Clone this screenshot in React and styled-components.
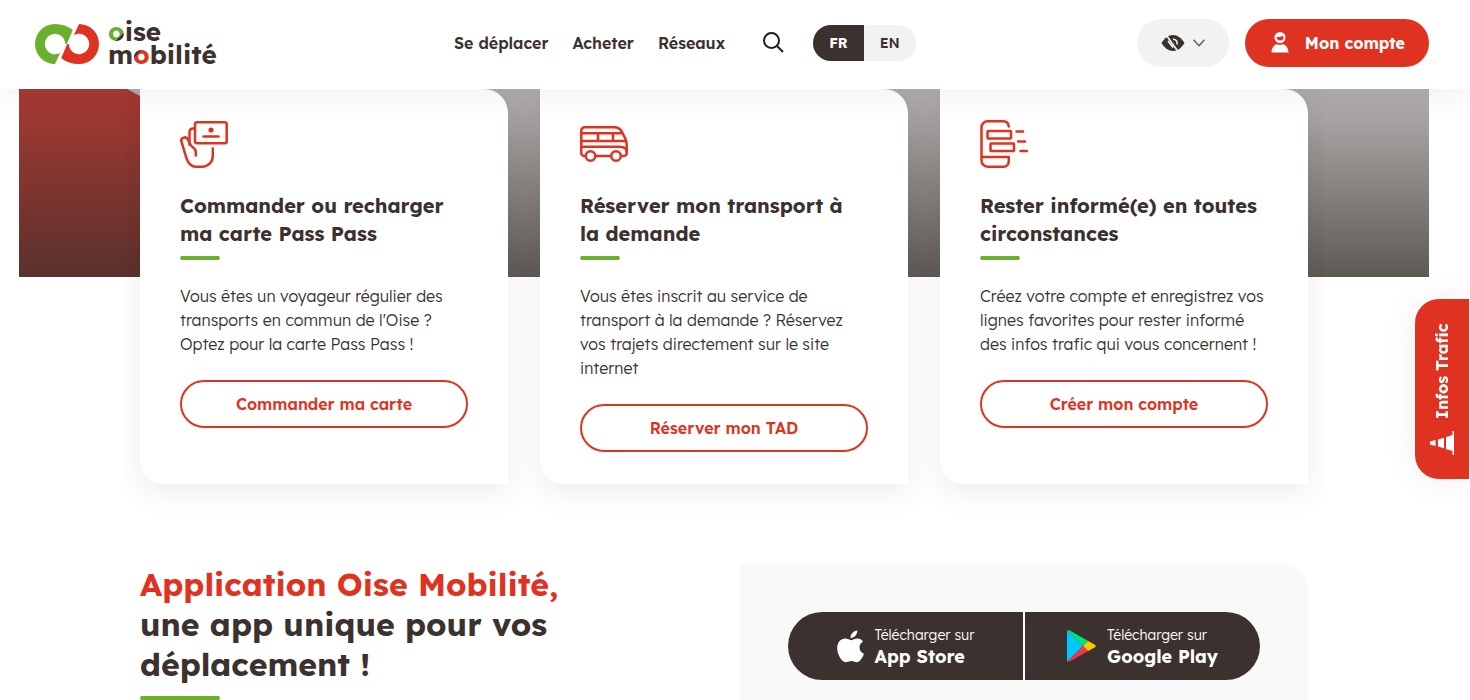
import styled, { createGlobalStyle, css } from "styled-components";

const colors = {
  red: "#e03221",
  green: "#6ab02e",
  dark: "#3b312e",
  grey: "#f2f2f2",
};

const GlobalStyle = createGlobalStyle`
  *, *::before, *::after {
    box-sizing: border-box;
  }
  body {
    margin: 0;
    background: #fff;
    color: ${colors.dark};
    font-family: Lexend, Inter, "Liberation Sans", sans-serif;
    font-size: 16px;
    line-height: 24px;
    overflow: hidden;
  }
  h1, h2, h3, p, ul {
    margin: 0;
    padding: 0;
  }
  a {
    color: inherit;
    text-decoration: none;
  }
  button {
    font-family: inherit;
    border: 0;
    cursor: pointer;
  }
  svg {
    display: block;
    flex: none;
  }
`;

// header
const Header = styled.header`
  position: sticky;
  top: 0;
  z-index: 10;
  display: flex;
  align-items: center;
  padding: 19px 41px 22px 35px;
  background: #fff;
  box-shadow: 0 8px 32px rgba(0, 0, 0, 0.06);
`;

const LogoLink = styled.a`
  display: flex;
  align-items: flex-end;
  gap: 9px;
  width: 184px;
`;

const LogoText = styled.span`
  font-size: 26px;
  font-weight: 700;
  line-height: 23px;
`;

const LogoWord = styled.span`
  display: flex;
`;

const LogoLetter = styled.span`
  background: linear-gradient(
    ${({ $angle }) => $angle},
    ${({ $color }) => $color} ${({ $stop }) => $stop},
    ${colors.dark} ${({ $stop }) => $stop}
  );
  background-clip: text;
  color: transparent;
`;

const Nav = styled.nav`
  display: flex;
  align-items: center;
  gap: 24px;
  margin-left: 235px;
  font-weight: 600;
`;

const SearchButton = styled.button`
  display: flex;
  padding: 0;
  margin: 0 4px 0 14px;
  background: none;
  color: #1c1c22;
`;

const LangSwitch = styled.div`
  display: flex;
  border-radius: 18px;
  overflow: hidden;
  background: ${colors.grey};
`;

const LangLink = styled.a`
  padding: 6px 16px;
  font-size: 14px;
  ${({ $active }) =>
    $active &&
    css`
      background: ${colors.dark};
      color: #fff;
      font-weight: 700;
    `}
`;

const Actions = styled.div`
  display: flex;
  gap: 16px;
  margin-left: auto;
`;

const PillButton = styled.button`
  display: flex;
  align-items: center;
  height: 48px;
  padding: 0 24px;
  border-radius: 24px;
  gap: ${({ $primary }) => ($primary ? "14px" : "8px")};
  background: ${({ $primary }) => ($primary ? colors.red : colors.grey)};
  color: ${({ $primary }) => ($primary ? "#fff" : colors.dark)};
  font-size: 16px;
  font-weight: 700;
`;

// hero and cards
const Main = styled.main`
  padding: 0 41px 0 19px;
`;

const Hero = styled.div`
  height: 188px;
  background: linear-gradient(#b4b0af, #a09b9a 25%, #5f5954);
`;

const HeroShape = styled.svg`
  width: 121px;
  height: 188px;
`;

const Carousel = styled.ul`
  max-width: 1200px;
  margin: -188px auto 0;
  padding: 0 16px 48px;
  display: grid;
  grid-template-columns: repeat(3, 1fr);
  gap: 32px;
  overflow: hidden;
  position: relative;
  list-style: none;
`;

const Card = styled.li`
  padding: 31px 40px 32px;
  background: #fff;
  border-radius: 0 24px 0 24px;
  box-shadow: 0 8px 32px rgba(0, 0, 0, 0.08);
`;

const CardTitle = styled.h3`
  margin-top: 24px;
  font-size: 20px;
  font-weight: 700;
  line-height: 28px;
`;

const Underline = styled.span`
  display: block;
  width: ${({ $wide }) => ($wide ? "80px" : "40px")};
  height: 4px;
  margin-top: ${({ $wide }) => ($wide ? "12px" : "8px")};
  border-radius: 2px;
  background: ${colors.green};
`;

const CardText = styled.p`
  margin: 24px 0;
  font-weight: 300;
`;

const CardLink = styled.a`
  display: block;
  padding: 10px 24px;
  border: 2px solid ${colors.red};
  border-radius: 24px;
  color: ${colors.red};
  font-weight: 600;
  text-align: center;
`;

// app section
const AppSection = styled.section`
  max-width: 1168px;
  margin: 32px auto 0;
  display: grid;
  grid-template-columns: 1fr 568px;
  gap: 32px;
`;

const AppTitle = styled.h2`
  font-size: 32px;
  font-weight: 700;
  line-height: 40px;
  em {
    display: block;
    font-style: normal;
    color: ${colors.red};
  }
`;

const StorePanel = styled.div`
  padding: 48px;
  background: #f9f9f9;
  border-radius: 0 24px 0 24px;
`;

const StoreLinks = styled.div`
  display: grid;
  grid-template-columns: 1fr 1fr;
  gap: 2px;
  border-radius: 34px;
  overflow: hidden;
  background: #fff;
`;

const StoreLink = styled.a`
  display: flex;
  align-items: center;
  justify-content: center;
  gap: 11px;
  height: 68px;
  background: ${colors.dark};
  color: #fff;
  font-size: 14px;
  font-weight: 300;
  line-height: 22px;
  strong {
    display: block;
    font-size: 18px;
    font-weight: 700;
  }
`;

const TrafficButton = styled.button`
  position: fixed;
  top: 299px;
  right: 1px;
  z-index: 5;
  display: flex;
  align-items: center;
  justify-content: center;
  gap: 12px;
  width: 54px;
  height: 180px;
  padding: 0;
  writing-mode: vertical-rl;
  transform: rotate(180deg);
  border-radius: 0 24px 24px 0;
  background: ${colors.red};
  box-shadow: 0 0 32px rgba(0, 0, 0, 0.08);
  color: #fff;
  font-size: 16px;
  font-weight: 700;
`;

const LOGO_HALF =
  "M20 0C27 0 33 2 37.800 6L31.800 20H30.200A10.200 10.200 0 1 0 25.200 28.800L20 40A20 20 0 0 1 20 0Z";

const LogoMark = () => (
  <svg width="64" height="42" viewBox="0 0 64 42" aria-hidden="true">
    <path d={LOGO_HALF} fill={colors.green} />
    <path d={LOGO_HALF} fill={colors.red} transform="rotate(180 32 20)" />
  </svg>
);

const SearchIcon = () => (
  <svg width="22" height="22" viewBox="0 0 22 22" fill="none" stroke="currentColor" strokeWidth="2">
    <circle cx="8.500" cy="8.500" r="7.500" />
    <path d="m14 14 6 6" />
  </svg>
);

const EyeIcon = () => (
  <svg width="24" height="18" viewBox="0 0 24 18">
    <path
      fill="currentColor"
      d="M.5 9C3.500 4 7.500 1 12 1s8.500 3 11.500 8c-3 5-7 8-11.500 8S3.500 14 .5 9Z"
    />
    <path
      d="M5.500 1.500 17 17.500M7 7l5 6.500M12 5.200c3 0 4.800 2.300 4 5.300"
      stroke={colors.grey}
      strokeWidth="1.600"
      fill="none"
    />
  </svg>
);

const ChevronIcon = () => (
  <svg width="12" height="8" viewBox="0 0 12 8" fill="none" stroke="#666" strokeWidth="1.500">
    <path d="m.6.8 5.400 6 5.400-6" />
  </svg>
);

const UserIcon = () => (
  <svg width="22" height="24" viewBox="-2 0 22 24">
    <circle cx="9" cy="6.500" r="5.500" fill="currentColor" />
    <path
      d="M5.500 5.700c2.700.5 4.800.2 6-.6l1.200.8c0 2.200-1.600 3.600-3.700 3.600S5.500 8 5.500 5.700Z"
      fill={colors.red}
    />
    <path d="M.5 21.500c0-4.500 3-8.300 5.500-8.300 1.800.8 4.200.8 6 0 2.500 0 5.500 3.800 5.500 8.300Z" fill="currentColor" />
  </svg>
);

const LineIcon = styled.svg.attrs({
  width: 48,
  height: 48,
  viewBox: "0 0 48 48",
  "aria-hidden": true,
})`
  fill: none;
  stroke: ${colors.red};
  stroke-width: 2.5;
  stroke-linecap: round;
  stroke-linejoin: round;
`;

const HandCardIcon = () => (
  <LineIcon>
    <rect x="15" y="2.200" width="31.700" height="21" rx="2" />
    <circle cx="31" cy="10" r="2.600" fill={colors.red} stroke="none" />
    <path d="M23.500 16.500h15" />
    <path d="M15 8.600h-1.500c-2.300 0-4 1.500-4 3.700v12.500" />
    <path d="M15.800 35.500v-3.200c0-2.600-1.300-4.100-3.300-5.300-1.300-.8-2.200-2.300-3-4.200l-1.500-3.200c-1-2-2.600-2.600-4.300-2-2 .6-2.800 2.200-2.200 4.200l4.700 15.500C8 43.200 11 46.700 16 46.700h6c6 0 10.800-4.700 10.800-10.700v-7.500" />
  </LineIcon>
);

const BusIcon = () => (
  <LineIcon>
    <path d="M5.500 36H4a2.700 2.700 0 0 1-2.700-2.700V10.700a3.500 3.500 0 0 1 3.500-3.500h29.500c3.500 0 6 1.500 7.600 4.500l3.500 7c.9 2 1.300 4 1.300 6v8.600A2.700 2.700 0 0 1 44 36h-2.500" />
    <path d="M15.500 36H31M1.300 13.200h41M1.300 21h44.700M1.300 26.800h38c4 0 7.400 1.500 7.400 5M18 13.200V21M33 13.200V21" />
    <circle cx="10.500" cy="36" r="4.800" />
    <circle cx="36" cy="36" r="4.800" />
  </LineIcon>
);

const PhoneIcon = () => (
  <LineIcon>
    <path d="M28.800 6.500C28.300 3.200 26.600 1.300 23.500 1.300H7.500A6 6 0 0 0 1.500 7.300v33.400a6 6 0 0 0 6 6h16c3.500 0 5.300-2.700 5.300-6V37H1.500" />
    <rect x="7.500" y="11" width="23.500" height="7.500" rx=".5" />
    <rect x="10.500" y="23.500" width="23.500" height="7.500" rx=".5" />
    <path d="M36.500 11.500H43M38 21.500h7M40.500 31H47" />
  </LineIcon>
);

const AppleIcon = () => (
  <svg width="27" height="33" viewBox="0 0 27 33" fill="currentColor">
    <path d="M20.300.5c.2 4-3 7.500-6.700 7.400C13.200 4.200 16.600.8 20.300.5Z" />
    <path d="M26 11.400c-2.400 1.500-3.600 3.500-3.500 6.200.1 3 1.600 5 4.400 6.200-1.200 3.700-3.900 8.400-6.900 8.400-2 0-3-1.300-5.600-1.300-2.700 0-3.800 1.300-5.700 1.300C5 32.200.2 24.800.2 18.300c0-6 3.700-9.700 8-9.700 2.400 0 4.400 1.600 5.900 1.600 1.400 0 3.700-1.700 6.600-1.700 2 0 4.100 1 5.300 2.900Z" />
  </svg>
);

const PlayIcon = () => (
  <svg width="29" height="32" viewBox="0 0 29 32">
    <path d="M.4.600C.1 1 0 1.500 0 2v28c0 .5.100 1 .4 1.400L16 16Z" fill="#00c8f8" />
    <path d="M.4.600C1 0 1.800 0 2.700.5L21.300 11 16 16Z" fill="#00e676" />
    <path d="m.4 31.400c.6.600 1.400.6 2.300.1L21.300 21 16 16Z" fill="#f4364c" />
    <path d="m21.300 11 6.500 3.700c1.400.8 1.400 1.800 0 2.600L21.300 21 16 16Z" fill="#ffc900" />
  </svg>
);

// lies on its side and mirrored: the button around it is turned by half a circle
const ConeIcon = () => (
  <svg width="26" height="24" viewBox="0 0 26 24" fill="currentColor">
    <path d="M1 0h1.500v4L9 6v12L2.500 20v4H1ZM11 6.800l6 1.600v7.200l-6 1.600ZM19.500 9l5.500 1.500v3L19.500 15Z" />
  </svg>
);

const cards = [
  {
    Icon: HandCardIcon,
    title: ["Commander ou recharger", "ma carte Pass Pass"],
    text: [
      "Vous êtes un voyageur régulier des",
      "transports en commun de l'Oise ?",
      "Optez pour la carte Pass Pass !",
    ],
    action: "Commander ma carte",
  },
  {
    Icon: BusIcon,
    title: ["Réserver mon transport à", "la demande"],
    text: [
      "Vous êtes inscrit au service de",
      "transport à la demande ? Réservez",
      "vos trajets directement sur le site",
      "internet",
    ],
    action: "Réserver mon TAD",
  },
  {
    Icon: PhoneIcon,
    title: ["Rester informé(e) en toutes", "circonstances"],
    text: [
      "Créez votre compte et enregistrez vos",
      "lignes favorites pour rester informé",
      "des infos trafic qui vous concernent !",
    ],
    action: "Créer mon compte",
  },
];

const Line = styled.span`
  display: block;
  white-space: nowrap;
`;

const Lines = ({ items }) => items.map((line) => <Line key={line}>{line} </Line>);

const App = () => {
  return (
    <>
      <GlobalStyle />
      <Header>
        <LogoLink href="#">
          <LogoMark />
          <LogoText>
            <LogoWord>
              <LogoLetter $color={colors.green} $angle="135deg" $stop="72%">o</LogoLetter>
              <span>ise</span>
            </LogoWord>
            <LogoWord>
              <span>m</span>
              <LogoLetter $color={colors.red} $angle="315deg" $stop="62%">o</LogoLetter>
              <span>bilité</span>
            </LogoWord>
          </LogoText>
        </LogoLink>
        <Nav>
          <a href="#deplacer">Se déplacer</a>
          <a href="#acheter">Acheter</a>
          <a href="#reseaux">Réseaux</a>
          <SearchButton type="button" aria-label="Rechercher">
            <SearchIcon />
          </SearchButton>
          <LangSwitch>
            <LangLink href="#fr" $active>FR</LangLink>
            <LangLink href="#en">EN</LangLink>
          </LangSwitch>
        </Nav>
        <Actions>
          <PillButton type="button" aria-label="Accessibilité">
            <EyeIcon />
            <ChevronIcon />
          </PillButton>
          <PillButton type="button" $primary>
            <UserIcon />
            Mon compte
          </PillButton>
        </Actions>
      </Header>

      <Main>
        <Hero>
          <HeroShape viewBox="0 0 121 188" aria-hidden="true">
            <defs>
              <linearGradient id="hero-red" x1="0" y1="0" x2="0" y2="1">
                <stop offset="0" stopColor="#a93932" />
                <stop offset="1" stopColor="#5a312d" />
              </linearGradient>
            </defs>
            <path d="M0 0h108l13 7v181H0Z" fill="url(#hero-red)" />
          </HeroShape>
        </Hero>
        <Carousel>
          {cards.map(({ Icon, title, text, action }) => (
            <Card key={action}>
              <Icon />
              <CardTitle>
                <Lines items={title} />
              </CardTitle>
              <Underline />
              <CardText>
                <Lines items={text} />
              </CardText>
              <CardLink href="#">{action}</CardLink>
            </Card>
          ))}
        </Carousel>

        <AppSection>
          <div>
            <AppTitle>
              <em>Application Oise Mobilité,</em>
              <Lines items={["une app unique pour vos", "déplacement !"]} />
            </AppTitle>
            <Underline $wide />
          </div>
          <StorePanel>
            <StoreLinks>
              <StoreLink href="#app-store">
                <AppleIcon />
                <span>
                  Télécharger sur <strong>App Store</strong>
                </span>
              </StoreLink>
              <StoreLink href="#google-play">
                <PlayIcon />
                <span>
                  Télécharger sur <strong>Google Play</strong>
                </span>
              </StoreLink>
            </StoreLinks>
          </StorePanel>
        </AppSection>
      </Main>

      <TrafficButton type="button">
        <ConeIcon />
        Infos Trafic
      </TrafficButton>
    </>
  );
};

export default App;
